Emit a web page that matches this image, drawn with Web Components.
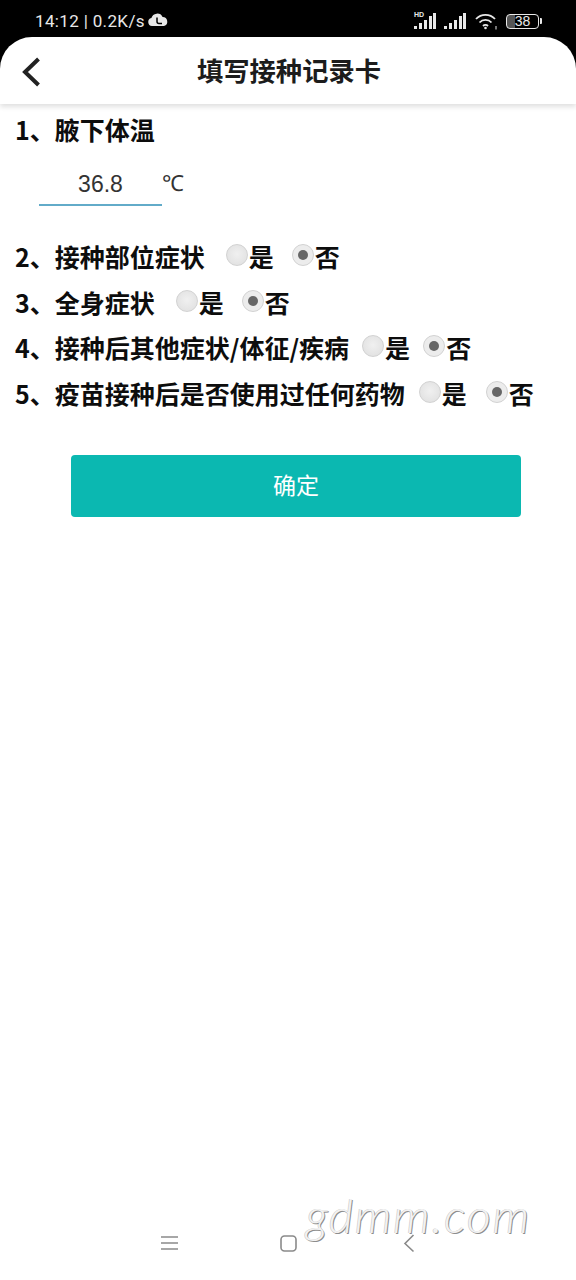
<!DOCTYPE html>
<html lang="zh">
<head>
<meta charset="utf-8">
<style>
  html, body { margin: 0; padding: 0; background: #fff; }
  body { width: 576px; height: 1280px; overflow: hidden; font-family: "Liberation Sans", "Noto Sans CJK SC", sans-serif; }
</style>
</head>
<body>
<app-screen>
  <status-bar></status-bar>
  <title-bar>填写接种记录卡</title-bar>
  <form-page>
    <h-label>1、腋下体温</h-label>
    <temp-field value="36.8" unit="℃"></temp-field>
    <yes-no-row gap="21" after="18" style="margin-top:27px">2、接种部位症状</yes-no-row>
    <yes-no-row gap="21" after="18">3、全身症状</yes-no-row>
    <yes-no-row gap="13" after="13">4、接种后其他症状/体征/疾病</yes-no-row>
    <yes-no-row gap="14" after="19">5、疫苗接种后是否使用过任何药物</yes-no-row>
    <confirm-button>确定</confirm-button>
  </form-page>
  <nav-bar></nav-bar>
  <water-mark>gdmm.com</water-mark>
</app-screen>

<script>
class AppScreen extends HTMLElement {
  constructor() {
    super();
    this.attachShadow({ mode: "open" }).innerHTML = `
      <style>
        :host { display: flex; flex-direction: column; width: 576px; height: 1280px; position: relative; background: #fff; overflow: hidden; }
      </style>
      <slot></slot>`;
  }
}

class StatusBar extends HTMLElement {
  constructor() {
    super();
    this.attachShadow({ mode: "open" }).innerHTML = `
      <style>
        :host { display: flex; align-items: center; justify-content: space-between; height: 37px; flex: none; background: #000; color: #e8e8e8; padding: 0 34px 0 35px; box-sizing: border-box; }
        .left { display: flex; align-items: center; font: 17px/20px Roboto, "Noto Sans", sans-serif; letter-spacing: .35px; margin-top: 5px; }
        .left svg { margin-left: 3px; margin-top: -3px; }
        .right { display: flex; align-items: center; gap: 6px; margin-top: 5px; }
        .hd { position: relative; width: 22px; height: 16px; }
        .hd b { position: absolute; left: 0; top: -2px; font: bold 7px/8px "Liberation Sans", sans-serif; }
        .batt { display: flex; align-items: center; margin-left: 1px; }
        .batt span { display: block; width: 33px; height: 15px; border: 1.5px solid #e8e8e8; border-radius: 4px; box-sizing: border-box; font: 14px/12px "Liberation Sans", sans-serif; text-align: center; background: linear-gradient(90deg, #555 0 25%, #000 25%); }
        .batt i { display: block; width: 2px; height: 6px; margin-left: 1px; background: #e8e8e8; border-radius: 0 1px 1px 0; }
      </style>
      <div class="left">
        <span>14:12 | 0.2K/s</span>
        <svg width="20" height="14" viewBox="0 0 20 14"><path fill="#e8e8e8" d="M4 13a4 4 0 0 1-.6-7.9A6 6 0 0 1 14.6 4 4.6 4.6 0 0 1 16 13z"/><path fill="none" stroke="#000" stroke-width="1.5" d="M9 4.5V8.5a2 2 0 0 0 2 2h3"/></svg>
      </div>
      <div class="right">
        <div class="hd"><b>HD</b>
          <svg width="22" height="16" viewBox="0 0 22 16" fill="#e8e8e8"><rect x="0" y="13" width="3" height="3"/><rect x="5" y="10" width="3" height="6"/><rect x="10" y="7" width="3" height="9"/><rect x="15" y="3" width="3" height="13"/><rect x="19" y="0" width="3" height="16"/></svg>
        </div>
        <svg width="22" height="16" viewBox="0 0 22 16" fill="#e8e8e8" style="margin-left:2px"><rect x="0" y="13" width="3" height="3"/><rect x="5" y="10" width="3" height="6"/><rect x="10" y="7" width="3" height="9"/><rect x="15" y="3" width="3" height="13"/><rect x="19" y="0" width="3" height="16"/></svg>
        <svg width="24" height="17" viewBox="0 0 24 17" fill="none" stroke="#e8e8e8" stroke-width="1.8" style="margin-left:3px"><path d="M1 6a13 13 0 0 1 19 0"/><path d="M4.5 9.5a8 8 0 0 1 12 0"/><path d="M8 13a3.5 3.5 0 0 1 5 0"/><circle cx="10.5" cy="15" r="1.3" fill="#e8e8e8" stroke="none"/><path d="M21 13v3.5" stroke-width="1"/></svg>
        <div class="batt"><span>38</span><i></i></div>
      </div>`;
  }
}

class TitleBar extends HTMLElement {
  constructor() {
    super();
    this.attachShadow({ mode: "open" }).innerHTML = `
      <style>
        :host { display: block; flex: none; background: #000; position: relative; z-index: 1; }
        .bar { height: 67px; display: flex; align-items: center; justify-content: center; background: #fff; border-radius: 32px 32px 0 0; box-shadow: 0 3px 5px rgba(0,0,0,.12); position: relative; }
        h1 { margin: -2px 0 0 2px; font: bold 26.3px/34px "Noto Sans CJK SC", sans-serif; color: #1c1c1c; }
        svg { position: absolute; left: 21px; top: 20px; }
      </style>
      <div class="bar">
        <svg width="20" height="30" viewBox="0 0 20 30" fill="none" stroke="#222" stroke-width="4"><path d="M17.5 2 4 15l13.5 13"/></svg>
        <h1><slot></slot></h1>
      </div>`;
  }
}

class FormPage extends HTMLElement {
  constructor() {
    super();
    this.attachShadow({ mode: "open" }).innerHTML = `
      <style>
        :host { display: block; flex: 1; padding: 8px 0 0 15px; color: #0d0d0d; font: bold 25px/34px "Noto Sans CJK SC", sans-serif; }
      </style>
      <slot></slot>`;
  }
}

class HLabel extends HTMLElement {
  constructor() {
    super();
    this.attachShadow({ mode: "open" }).innerHTML = `
      <style>:host { display: block; height: 34px; }</style><slot></slot>`;
  }
}

class TempField extends HTMLElement {
  constructor() {
    super();
    this.attachShadow({ mode: "open" });
  }
  connectedCallback() {
    this.shadowRoot.innerHTML = `
      <style>
        :host { display: flex; margin: 18px 0 0 24px; height: 42px; font: 23px/34px "Liberation Sans", sans-serif; color: #333; }
        .val { width: 123px; height: 42px; box-sizing: border-box; border-bottom: 2px solid #62abc9; text-align: center; padding-top: 3px; }
        .unit { font-size: 22px; padding-top: 3px; }
      </style>
      <div class="val">${this.getAttribute("value")}</div>
      <div class="unit">${this.getAttribute("unit")}</div>`;
  }
}

class RadioDot extends HTMLElement {
  constructor() {
    super();
    this.attachShadow({ mode: "open" }).innerHTML = `
      <style>
        :host { display: block; width: 22px; height: 22px; flex: none; border-radius: 50%; box-sizing: border-box; border: 1px solid #d2d2d2; background: radial-gradient(circle at 50% 45%, #f0f0f0, #dedede); position: relative; top: -1px; }
        :host([on]) { background: #ececec; }
        :host([on])::after { content: ""; position: absolute; left: 5px; top: 5px; width: 10px; height: 10px; border-radius: 50%; background: #666; }
      </style>`;
  }
}

class YesNoRow extends HTMLElement {
  constructor() {
    super();
    this.attachShadow({ mode: "open" });
  }
  connectedCallback() {
    const gap = this.getAttribute("gap") || 20;
    const after = this.getAttribute("after") || 18;
    this.shadowRoot.innerHTML = `
      <style>
        :host { display: flex; align-items: center; height: 45.7px; white-space: nowrap; }
        .r { display: flex; align-items: center; gap: 1px; }
        .yes { margin-left: ${gap}px; margin-right: ${after}px; }
      </style>
      <slot></slot>
      <div class="r yes"><radio-dot></radio-dot><span>是</span></div>
      <div class="r"><radio-dot on></radio-dot><span>否</span></div>`;
  }
}

class ConfirmButton extends HTMLElement {
  constructor() {
    super();
    this.attachShadow({ mode: "open" }).innerHTML = `
      <style>
        :host { display: flex; align-items: center; justify-content: center; width: 450px; height: 62px; margin: 39px 0 0 56px; padding-bottom: 3px; box-sizing: border-box; background: #0bb8b1; border-radius: 4px; color: #fff; font: 23px/30px "Noto Sans CJK SC", sans-serif; }
      </style>
      <slot></slot>`;
  }
}

class NavBar extends HTMLElement {
  constructor() {
    super();
    this.attachShadow({ mode: "open" }).innerHTML = `
      <style>
        :host { display: flex; flex: none; height: 62px; align-items: flex-start; padding: 16px 0 0 161px; box-sizing: border-box; }
        svg { display: block; fill: none; stroke: #8a8a8a; stroke-width: 1.6; }
      </style>
      <svg width="17" height="20" viewBox="0 0 17 20"><path d="M0 3h17M0 9h17M0 15h17"/></svg>
      <svg width="18" height="20" viewBox="0 0 18 20" style="margin-left:102px"><rect x="1" y="2" width="15" height="15" rx="3.5"/></svg>
      <svg width="12" height="20" viewBox="0 0 12 20" style="margin-left:105px"><path d="M10.5 1 2 9.5l8.5 8"/></svg>`;
  }
}

class WaterMark extends HTMLElement {
  constructor() {
    super();
    this.attachShadow({ mode: "open" }).innerHTML = `
      <style>
        :host { position: absolute; left: 306px; top: 1189px; font: italic 300 47px/52px Lato, "Open Sans", sans-serif; color: #f2f2f2; letter-spacing: 1.7px; text-shadow: 1px 1px 0 #8d8d8d, -.5px -.5px 0 #c4c4c4; }
      </style>
      <slot></slot>`;
  }
}

customElements.define("app-screen", AppScreen);
customElements.define("status-bar", StatusBar);
customElements.define("title-bar", TitleBar);
customElements.define("form-page", FormPage);
customElements.define("h-label", HLabel);
customElements.define("temp-field", TempField);
customElements.define("radio-dot", RadioDot);
customElements.define("yes-no-row", YesNoRow);
customElements.define("confirm-button", ConfirmButton);
customElements.define("nav-bar", NavBar);
customElements.define("water-mark", WaterMark);
</script>
</body>
</html>
